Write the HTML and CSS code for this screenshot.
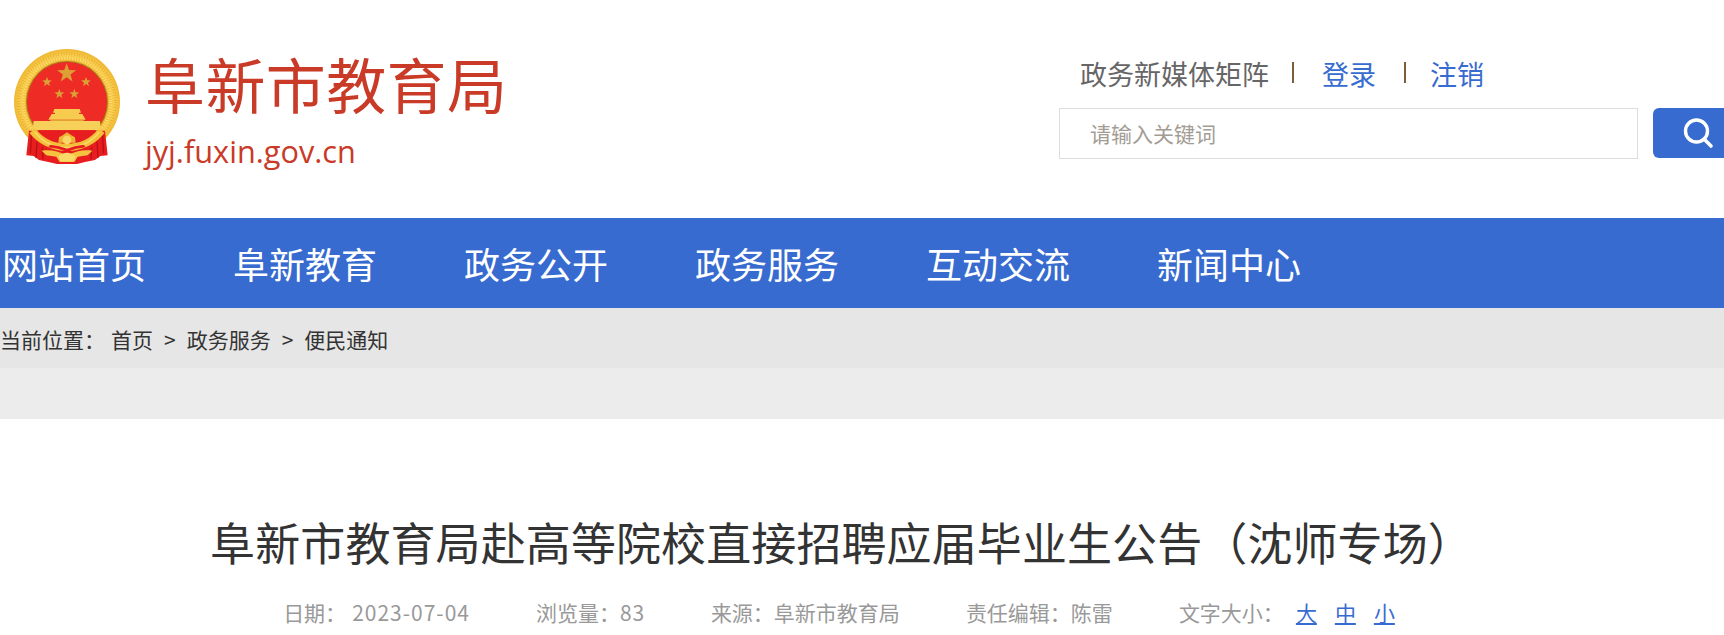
FILE: index.html
```html
<!DOCTYPE html>
<html lang="zh-CN">
<head>
<meta charset="utf-8">
<title>阜新市教育局赴高等院校直接招聘应届毕业生公告（沈师专场）</title>
<link rel="stylesheet" href="styles.css">
</head>
<body>
<header class="header">
  <div class="brand">
    <svg class="emblem" viewBox="0 0 375 390" aria-hidden="true">
      <defs>
        <radialGradient id="gold" cx="0.5" cy="0.5" r="0.5">
          <stop offset="0.75" stop-color="#f0b429"/>
          <stop offset="0.88" stop-color="#f8cf52"/>
          <stop offset="1" stop-color="#efb62f"/>
        </radialGradient>
        <polygon id="star" points="0,-10 2.35,-3.24 9.51,-3.09 3.8,1.24 5.88,8.09 0,4 -5.88,8.09 -3.8,1.24 -9.51,-3.09 -2.35,-3.24"/>
      </defs>
      <circle cx="186" cy="186" r="159" fill="url(#gold)"/>
      <circle cx="186" cy="186" r="145" fill="none" stroke="#e7a827" stroke-width="10" stroke-dasharray="2 6"/>
      <circle cx="186" cy="186" r="131" fill="none" stroke="#ffe07a" stroke-width="9" stroke-dasharray="3 5"/>
      <circle cx="186" cy="186" r="123" fill="#a97b22"/>
      <circle cx="186" cy="186" r="120" fill="#ee2b25"/>
      <use href="#star" transform="translate(185,100) scale(3)" fill="#dda035"/>
      <use href="#star" transform="translate(126,126) scale(1.55)" fill="#dda035"/>
      <use href="#star" transform="translate(243,126) scale(1.55)" fill="#dda035"/>
      <use href="#star" transform="translate(163,162) scale(1.55)" fill="#dda035"/>
      <use href="#star" transform="translate(208,162) scale(1.55)" fill="#dda035"/>
      <path d="M148 207h76l4 11h-6v4h10l10 17h-112l10-17h10v-4h-6z" fill="#f6cb50"/>
      <path d="M136 239h100v4h-100z" fill="#e39f30"/>
      <path d="M86 243h199l3 27h-205z" fill="#f7d05a"/>
      <path d="M72 272h228l8 74-22 2-16 12-30 6-24 6h-60l-26-6-28-6-16-12-22-2z" fill="#e81d1f"/>
      <path d="M80 280l-4 60M96 305l-3 48M112 322l2 36M292 280l4 60M276 305l3 48M260 322l-2 36" fill="none" stroke="#b91114" stroke-width="4"/>
      <path d="M82 272A133 133 0 0 0 290 272" fill="none" stroke="#f4c03a" stroke-width="22"/>
      <path d="M89 276A124 124 0 0 0 283 276" fill="none" stroke="#fadb6b" stroke-width="4"/>
      <path d="M160 308l2-16 11-6 13-9 13 9 11 6 2 16z" fill="#eeb534"/>
      <circle cx="186" cy="300" r="13" fill="#f9d868"/>
      <path d="M110 332c26-4 50 2 76 14 26-12 50-18 76-14l-14 14-30 4-10 16h-44l-10-16-30-4z" fill="#f4c440"/>
      <path d="M160 350c8-8 17-12 26-12s18 4 26 12l-8 14h-36z" fill="#fbd968"/>
      <path d="M130 322c18 2 38 6 56 14 18-8 38-12 56-14l-6-8c-18 2-36 6-50 12-14-6-32-10-50-12z" fill="#e81d1f"/>
    </svg>
    <div class="brand-text">
      <div class="brand-name">阜新市教育局</div>
      <div class="brand-domain">jyj.fuxin.gov.cn</div>
    </div>
  </div>
  <div class="tools">
    <div class="tool-links">
      <span class="tool-media">政务新媒体矩阵</span>
      <span class="tool-sep"></span>
      <a class="tool-link" href="#">登录</a>
      <span class="tool-sep tool-sep-second"></span>
      <a class="tool-link" href="#">注销</a>
    </div>
    <form class="search">
      <div class="search-box">请输入关键词</div>
      <button class="search-btn" type="button" aria-label="搜索">
        <svg class="search-icon" viewBox="0 0 32 32" aria-hidden="true">
          <circle cx="14.5" cy="14" r="11" fill="none" stroke="#fff" stroke-width="3.4"/>
          <path d="M22.5 22.5L29 29" stroke="#fff" stroke-width="3.6" stroke-linecap="round"/>
        </svg>
      </button>
    </form>
  </div>
</header>
<nav class="nav">
  <a class="nav-item" href="#">网站首页</a>
  <a class="nav-item" href="#">阜新教育</a>
  <a class="nav-item" href="#">政务公开</a>
  <a class="nav-item" href="#">政务服务</a>
  <a class="nav-item" href="#">互动交流</a>
  <a class="nav-item" href="#">新闻中心</a>
</nav>
<div class="crumbs">
  <span class="crumb-label">当前位置：</span>
  <a class="crumb" href="#">首页</a>
  <span class="crumb-arrow">&gt;</span>
  <a class="crumb" href="#">政务服务</a>
  <span class="crumb-arrow">&gt;</span>
  <a class="crumb" href="#">便民通知</a>
</div>
<div class="band"></div>
<main class="article">
  <h1 class="article-title">阜新市教育局赴高等院校直接招聘应届毕业生公告（沈师专场）</h1>
  <div class="meta">
    <span class="meta-item">日期：<span class="meta-date">2023-07-04</span></span>
    <span class="meta-item">浏览量：<span class="meta-num">83</span></span>
    <span class="meta-item">来源：阜新市教育局</span>
    <span class="meta-item">责任编辑：陈雷</span>
    <span class="meta-item meta-size">
      <span class="size-label">文字大小：</span>
      <a class="size-link" href="#">大</a>
      <a class="size-link" href="#">中</a>
      <a class="size-link" href="#">小</a>
    </span>
  </div>
</main>
</body>
</html>
```
FILE: styles.css
```css
* {
  box-sizing: border-box;
}
html,
body {
  margin: 0;
  height: 635px;
  overflow: hidden;
  background: #fff;
}
body {
  font-family: "Noto Sans CJK SC", "Noto Sans", sans-serif;
  color: #333;
}
a {
  text-decoration: none;
  color: inherit;
}
.header {
  height: 218px;
  display: flex;
  justify-content: space-between;
}
.brand {
  display: flex;
  padding: 40px 0 0 5px;
}
.emblem {
  width: 125px;
  height: 130px;
  flex: none;
}
.brand-text {
  margin-left: 15px;
  padding-top: 3px;
}
.brand-name {
  font-size: 60px;
  line-height: 80px;
  letter-spacing: 0.4px;
  color: #c93a27;
}
.brand-domain {
  font-family: "Open Sans", sans-serif;
  font-size: 30.7px;
  line-height: 40px;
  color: #c93a27;
  margin-top: 8px;
}
.tools {
  width: 665px;
  padding-top: 53px;
}
.tool-links {
  display: flex;
  align-items: center;
  height: 42px;
  padding-left: 21px;
  font-size: 27px;
  line-height: 42px;
}
.tool-media {
  color: #666;
}
.tool-sep {
  width: 2px;
  height: 21px;
  background: #7a5f3a;
  margin: 0 28px 3px 23px;
}
.tool-sep-second {
  margin: 0 24px 3px 28px;
}
.tool-link {
  color: #386bd0;
}
.search {
  display: flex;
  margin-top: 13px;
}
.search-box {
  width: 579px;
  height: 51px;
  flex: none;
  border: 1px solid #ddd;
  padding-left: 30px;
  font-size: 21px;
  line-height: 49px;
  color: #a39c94;
}
.search-btn {
  margin-left: 15px;
  width: 71px;
  height: 50px;
  flex: none;
  border: 0;
  border-radius: 6px 0 0 6px;
  background: #386bd0;
  padding: 0 0 0 29px;
  text-align: left;
}
.search-icon {
  display: block;
  width: 32px;
  height: 32px;
}
.nav {
  height: 90px;
  background: #386bd0;
  display: flex;
  align-items: center;
  padding-left: 2px;
}
.nav-item {
  width: 231px;
  font-size: 36px;
  line-height: 90px;
  color: #fff;
}
.crumbs {
  height: 60px;
  background: #e6e6e6;
  display: flex;
  align-items: center;
  padding-top: 2px;
  font-size: 21px;
  color: #333;
}
.crumb-label {
  width: 111px;
}
.crumb-arrow {
  margin: 0 11px;
}
.band {
  height: 51px;
  background: #ececec;
}
.article {
  width: 1678px;
  padding-top: 91px;
}
.article-title {
  margin: 0;
  padding-left: 5px;
  font-size: 45px;
  font-weight: 400;
  line-height: 64px;
  letter-spacing: 0.1px;
  text-align: center;
  color: #333;
}
.meta {
  display: flex;
  justify-content: center;
  gap: 66px;
  margin-top: 22px;
  font-size: 21px;
  line-height: 32px;
  color: #999;
}
.meta-date {
  margin-left: 6px;
  letter-spacing: 1px;
}
.meta-num {
  letter-spacing: 0.8px;
}
.meta-size {
  display: flex;
}
.size-label {
  width: 117px;
}
.size-link {
  color: #386bd0;
  text-decoration: underline;
  margin-right: 18px;
}
.size-link:last-child {
  margin-right: 0;
}
```
